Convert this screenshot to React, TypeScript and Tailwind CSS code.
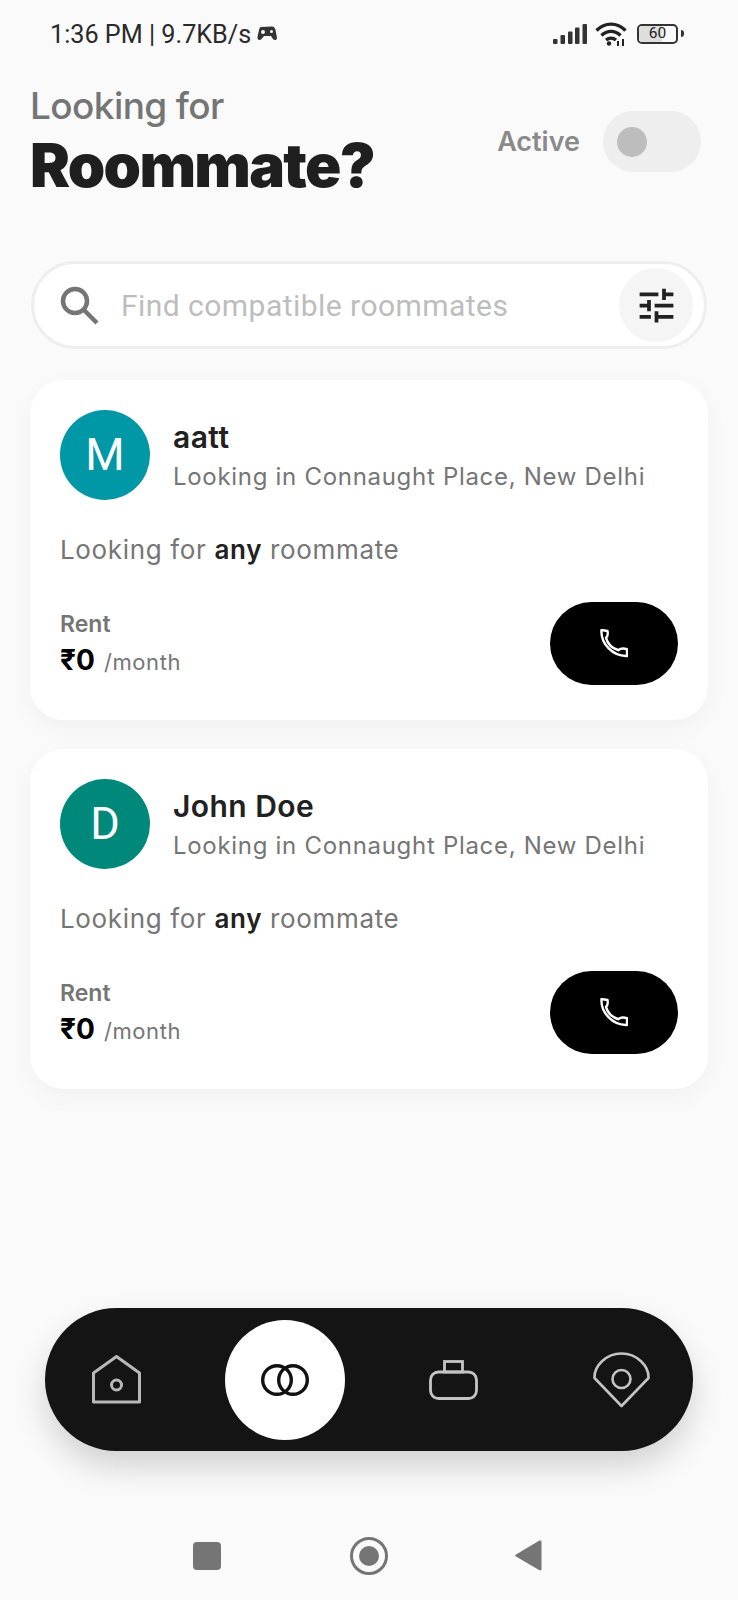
import { MdTune } from 'react-icons/md';

const inter = 'font-["Inter",sans-serif]';

function StatusBar() {
  return (
    <div className="flex h-[67px] items-center justify-between pl-[50px] pr-[54px] text-[#2a2a2a]">
      <div className="flex items-center gap-[6px]">
        <span className='font-["Roboto",sans-serif] text-[25.2px] leading-none pt-[2px]'>1:36 PM | 9.7KB/s</span>
        <svg width="20" height="15" viewBox="0 0 20 15" fill="#333">
          <path d="M4 1 L15 0.5 C17 0.5 18 2 18.5 4 L20 12 C20 14 17.5 15 16 13 L14 10 H7 L4.5 13 C3 15 0 14 0.5 11 L2 4 C2.5 2 3 1 4 1 Z" />
          <circle cx="6" cy="6" r="2" fill="#fafafa" />
          <circle cx="14.5" cy="5.5" r="1.5" fill="#fafafa" />
        </svg>
      </div>
      <div className="flex items-center">
        <svg width="34" height="20" viewBox="0 0 34 20" fill="#333">
          <rect x="0" y="15" width="4.5" height="5" rx="1" />
          <rect x="7.5" y="11" width="4.5" height="9" rx="1" />
          <rect x="15" y="7.5" width="4.5" height="12.5" rx="1" />
          <rect x="22" y="3.5" width="4.5" height="16.5" rx="1" />
          <rect x="29.5" y="0" width="4.5" height="20" rx="1" />
        </svg>
        <svg className="ml-[8px]" width="32" height="24" viewBox="0 0 32 24" fill="none" stroke="#222" strokeWidth="3.4">
          <path d="M1.5 8.5 C 10 0, 22 0, 30.5 8.5" />
          <path d="M6.5 13.5 C 12 8, 20 8, 25.5 13.5" />
          <path d="M11 18 C 14 15.5, 18 15.5, 21 18" />
          <circle cx="14" cy="21.5" r="2.2" fill="#222" stroke="none" />
          <path d="M23 19 v5 M28 17 v7" strokeWidth="2" />
        </svg>
        <div className="ml-[10px] flex items-center gap-[3px]">
          <div className="relative flex h-[20px] w-[41px] items-center justify-center overflow-hidden rounded-[5px] border-2 border-[#333]">
            <div className="absolute inset-y-0 left-0 w-[23px] bg-[#dedede]" />
            <span className='relative font-["Roboto",sans-serif] text-[15.5px] leading-none text-[#222]'>60</span>
          </div>
          <div className="h-[7px] w-[3px] rounded-r bg-[#333]" />
        </div>
      </div>
    </div>
  );
}

function Header() {
  return (
    <div className="flex items-center justify-between pl-[30px] pr-[37px] pt-[17px]">
      <div className={inter}>
        <div className="text-[37px] font-medium leading-[44px] tracking-[-0.6px] text-[#757575]">Looking for</div>
        <div className="mt-[3px] text-[60px] font-black leading-[68px] tracking-[-1.7px] text-[#1f1f1f]">Roommate?</div>
      </div>
      <div className="flex items-center gap-[23px]">
        <span className={`${inter} pt-[2px] text-[27px] font-semibold text-[#8a8a8a]`}>Active</span>
        <div className="flex h-[61px] w-[98px] items-center rounded-full bg-[#eeeeee] pl-[14px]">
          <div className="h-[30px] w-[30px] rounded-full bg-[#bdbdbd]" />
        </div>
      </div>
    </div>
  );
}

function SearchBar() {
  return (
    <div className="mx-[31px] mt-[62px] flex h-[88px] items-center rounded-full border-[3px] border-[#eeeeee] bg-white pl-[25px] pr-[11px]">
      <svg width="40" height="40" viewBox="0 0 40 40" fill="none" stroke="#757575" strokeWidth="4.5">
        <circle cx="16" cy="16" r="12" />
        <path d="M25 25 L38 38" />
      </svg>
      <span className='ml-[22px] flex-1 font-["Roboto",sans-serif] text-[30px] tracking-[0.46px] text-[#bdbdbd]'>
        Find compatible roommates
      </span>
      <div className="flex h-[74px] w-[74px] items-center justify-center rounded-full bg-[#f5f5f5]">
        <MdTune className="h-[45px] w-[45px] text-[#212121]" />
      </div>
    </div>
  );
}

function RoommateCard({ name, initial, color }: { name: string; initial: string; color: string }) {
  return (
    <div className="mx-[30px] h-[340px] rounded-[34px] bg-white px-[30px] pt-[30px] shadow-[0_8px_24px_rgba(0,0,0,0.04)]">
      <div className="flex items-center gap-[23px]">
        <div
          className={`flex h-[90px] w-[90px] items-center justify-center rounded-full font-["Roboto",sans-serif] text-[45px] text-white ${color}`}
        >
          {initial}
        </div>
        <div className={`${inter} pt-[3px]`}>
          <div className="text-[30px] font-semibold leading-[34px] tracking-[0.45px] text-[#212121]">{name}</div>
          <div className="mt-[7px] text-[24px] leading-[32px] tracking-[0.7px] text-[#757575]">
            Looking in Connaught Place, New Delhi
          </div>
        </div>
      </div>
      <div className={`${inter} mt-[33px] text-[26px] leading-[34px] tracking-[0.65px] text-[#757575]`}>
        Looking for <span className="font-semibold text-[#212121]">any</span> roommate
      </div>
      <div className="mt-[35px] flex items-center justify-between">
        <div className={`${inter} pt-[1px]`}>
          <div className="text-[23px] font-semibold leading-[28px] text-[#757575]">Rent</div>
          <div className="mt-[4px] flex items-baseline gap-[9px]">
            <span className="text-[28px] font-bold leading-[36px] text-black">₹0</span>
            <span className="text-[22px] tracking-[0.6px] text-[#757575]">/month</span>
          </div>
        </div>
        <div className="flex h-[83px] w-[128px] items-center justify-center rounded-full bg-black">
          <svg width="28" height="29" viewBox="0 0 28 28" fill="none" stroke="white" strokeWidth="2.4" strokeLinejoin="round" preserveAspectRatio="none">
            <path d="M1.5 1 L7.5 2 C8 4.5 8 7 6 8.5 C7.5 14 12 18.5 18.5 20.5 C20.5 18.5 24 18.5 27 19.5 L27 26 C12.5 26.5 0.5 14 1.5 1 Z" />
          </svg>
        </div>
      </div>
    </div>
  );
}

function BottomNav() {
  return (
    <div className="mx-[45px] mt-auto flex h-[143px] items-center rounded-full bg-[#141414] pl-[47px] shadow-[0_16px_32px_rgba(0,0,0,0.16)]">
      <svg width="49" height="49" viewBox="0 0 49 49" fill="none" stroke="#b8b8b8" strokeWidth="3">
        <path d="M1.5 47 V18 L24.5 1.5 L47.5 18 V47 Z" strokeLinejoin="round" />
        <circle cx="24.5" cy="30" r="5" />
      </svg>
      <div className="ml-[84px] flex h-[120px] w-[120px] items-center justify-center rounded-full bg-white">
        <svg width="48" height="32" viewBox="0 0 48 32" fill="none" stroke="#111" strokeWidth="3.4">
          <circle cx="16" cy="16" r="14.3" />
          <circle cx="32" cy="16" r="14.3" />
        </svg>
      </div>
      <svg className="ml-[84px]" width="49" height="40" viewBox="0 0 49 40" fill="none" stroke="#c4c4c4" strokeWidth="2.8">
        <rect x="1.5" y="12" width="46" height="26.5" rx="8" />
        <rect x="15.5" y="1.5" width="18" height="10.5" />
      </svg>
      <svg className="ml-[115px]" width="57" height="56" viewBox="0 0 57 56" fill="none" stroke="#c4c4c4" strokeWidth="2.6">
        <path d="M28.5 1.5 C44 1.5 56 14 55.5 26 L28.5 54 L1.5 26 C1 14 13 1.5 28.5 1.5 Z" strokeLinejoin="round" />
        <circle cx="28.5" cy="27" r="9" />
      </svg>
    </div>
  );
}

function SystemNav() {
  return (
    <div className="mt-[89px] mb-[29px] flex h-[31px] items-center pl-[193px]">
      <div className="h-[28px] w-[28px] rounded-[4px] bg-[#757575]" />
      <div className="ml-[129px] flex h-[38px] w-[38px] items-center justify-center rounded-full border-[3px] border-[#757575]">
        <div className="h-[20px] w-[20px] rounded-full bg-[#757575]" />
      </div>
      <svg className="ml-[127px]" width="27" height="31" viewBox="0 0 27 31" fill="#757575">
        <path d="M24.5 0.5 C26 0.2 26.5 1 26.5 2 V29 C26.5 30 26 30.8 24.5 30.3 L1 16.5 C0 16 0 15 1 14.5 Z" />
      </svg>
    </div>
  );
}

export default function App() {
  return (
    <div className="flex h-[1600px] w-[738px] flex-col overflow-hidden bg-[#fafafa]">
      <StatusBar />
      <Header />
      <SearchBar />
      <div className="mt-[31px] flex flex-col gap-[29px]">
        <RoommateCard name="aatt" initial="M" color="bg-[#0097a7]" />
        <RoommateCard name="John Doe" initial="D" color="bg-[#00897b]" />
      </div>
      <BottomNav />
      <SystemNav />
    </div>
  );
}
